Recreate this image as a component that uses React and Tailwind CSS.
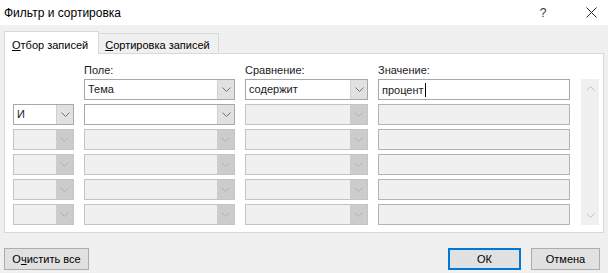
import { useState } from 'react'

const FONT = "font-['Liberation_Sans','Noto_Sans',sans-serif]"

function Chevron({ up = false, color = '#6d6d6d' }) {
  return (
    <svg width="9" height="6" viewBox="0 0 9 6" className={up ? 'rotate-180' : ''}>
      <polyline points="0.5,0.5 4.5,4.5 8.5,0.5" fill="none" stroke={color} strokeWidth="1" />
    </svg>
  )
}

// Win10-style combo box; disabled ones are greyed out
function Combo({ width, text, disabled }) {
  return (
    <div
      className={`flex h-[21px] border ${width} ${
        disabled ? 'border-[#c4c4c4] bg-[#f0f0f0]' : 'border-[#a8a8a8] bg-white'
      }`}
    >
      <div className="flex-1 pl-[3px] text-[11px] leading-[19px] text-[#1a1a1a]">{text}</div>
      <div
        className={`flex w-[17px] items-center justify-center ${
          disabled ? 'bg-[#cccccc]' : 'bg-[#e1e1e1] border-l border-[#d0d0d0]'
        }`}
      >
        <Chevron color={disabled ? '#b0b0b0' : '#707070'} />
      </div>
    </div>
  )
}

function ValueBox({ text, disabled }) {
  return (
    <div
      className={`h-[21px] w-[192px] border pl-[3px] text-[11px] leading-[19px] text-[#1a1a1a] ${
        disabled ? 'border-[#b4b4b4] bg-[#f0f0f0]' : 'border-[#a8a8a8] bg-white'
      }`}
    >
      {text}
      {text && <span className="ml-[1px] inline-block h-[14px] w-px translate-y-[3px] bg-black" />}
    </div>
  )
}

export default function App() {
  const [tab] = useState(0)
  const rows = [0, 1, 2, 3, 4, 5]

  return (
    <div className={`flex h-[273px] w-[608px] flex-col overflow-hidden bg-[#f0f0f0] ${FONT} text-[11px] text-black`}>
      {/* title bar */}
      <div className="flex h-[25px] shrink-0 items-center bg-white pl-[4px]">
        <div className="flex-1 text-[12px]">Фильтр и сортировка</div>
        <div className="w-[12px] text-center text-[12px] text-[#333]">?</div>
        <div className="ml-[36px] mr-[11px] flex w-[12px] items-center justify-center">
          <svg width="11" height="11" viewBox="0 0 11 11">
            <path d="M0.5 0.5 L10.5 10.5 M10.5 0.5 L0.5 10.5" stroke="#222" strokeWidth="1" />
          </svg>
        </div>
      </div>

      {/* tabs */}
      <div className="mt-[6px] flex items-end pl-[4px]">
        <div
          className={`relative z-10 -mb-px flex h-[23px] items-start border border-b-0 border-[#d9d9d9] bg-white pl-[7px] pr-[10px] pt-[5px] ${
            tab === 0 ? '' : ''
          }`}
        >
          <span><span className="underline">О</span>тбор записей</span>
        </div>
        <div className="flex h-[20px] items-start border border-b-0 border-l-0 border-[#d9d9d9] bg-[#f0f0f0] pl-[6px] pr-[8px] pt-[3px]">
          <span><span className="underline">С</span>ортировка записей</span>
        </div>
      </div>

      {/* filter panel */}
      <div className="mx-[4px] flex h-[180px] flex-col border border-[#d9d9d9] bg-white pl-[8px] pt-[8px]">
        <div className="flex h-[17px] text-[11px] text-[#1a1a1a]">
          <div className="w-[71px]" />
          <div className="w-[161px]">Поле:</div>
          <div className="w-[133px]">Сравнение:</div>
          <div>Значение:</div>
        </div>
        <div className="flex">
          <div className="flex flex-col gap-[4px]">
            {rows.map((r) => (
              <div key={r} className="flex gap-[10px]">
                {r === 0 ? (
                  <div className="w-[61px]" />
                ) : (
                  <Combo width="w-[61px]" text={r === 1 ? 'И' : ''} disabled={r > 1} />
                )}
                <Combo width="w-[151px]" text={r === 0 ? 'Тема' : ''} disabled={r > 1} />
                <Combo width="w-[123px]" text={r === 0 ? 'содержит' : ''} disabled={r > 0} />
                <ValueBox text={r === 0 ? 'процент' : ''} disabled={r > 0} />
              </div>
            ))}
          </div>
          {/* scrollbar */}
          <div className="ml-[11px] flex w-[18px] flex-col items-center justify-between bg-[#f0f0f0] py-[6px]">
            <Chevron up color="#c2c2c2" />
            <Chevron color="#c2c2c2" />
          </div>
        </div>
      </div>

      {/* buttons */}
      <div className="mt-[15px] flex items-start px-[4px]">
        <button className="h-[22px] w-[85px] border border-[#adadad] bg-[#e1e1e1] text-[11px]">
          О<span className="underline">ч</span>истить все
        </button>
        <div className="flex-1" />
        <button className="h-[22px] w-[73px] border-2 border-[#0078d7] bg-[#e1e1e1] text-[11px]">ОК</button>
        <button className="ml-[10px] h-[22px] w-[69px] border border-[#adadad] bg-[#e1e1e1] text-[11px]">Отмена</button>
        <div className="w-[4px]" />
      </div>
    </div>
  )
}
